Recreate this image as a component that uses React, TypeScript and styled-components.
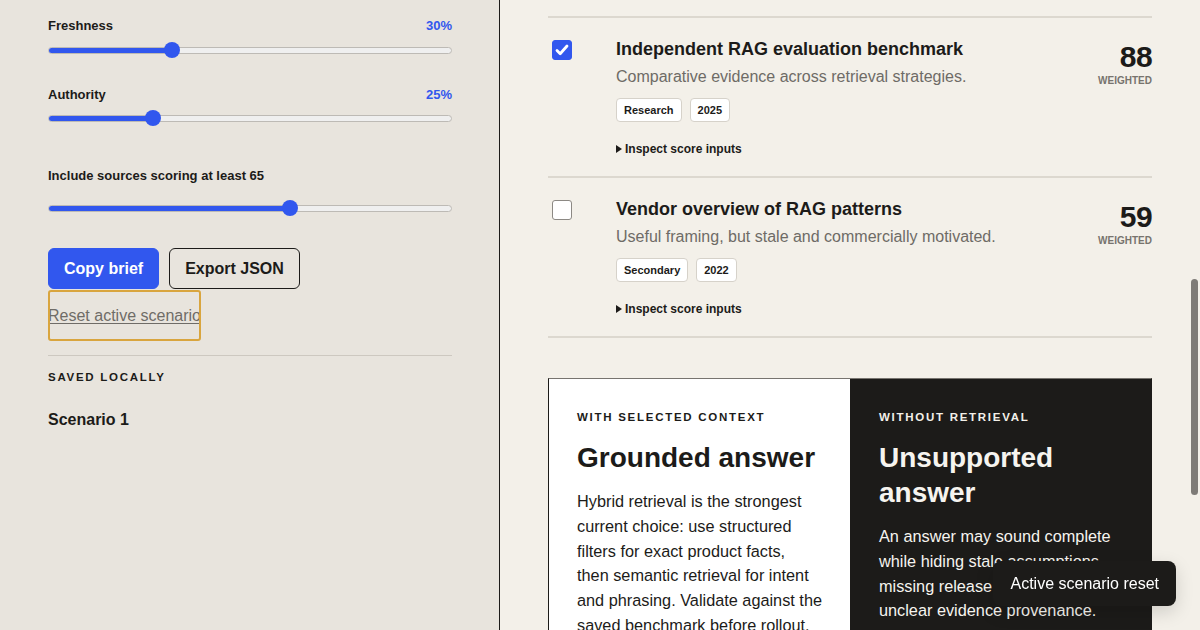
import { FC } from 'react'
import styled, { createGlobalStyle } from 'styled-components'

const GlobalStyle = createGlobalStyle`
  html, body {
    margin: 0;
    padding: 0;
    height: 100%;
    overflow: hidden;
  }
  body {
    font-family: "Liberation Sans", Arial, Helvetica, sans-serif;
    color: #1c1b19;
    -webkit-font-smoothing: antialiased;
  }
  * {
    box-sizing: border-box;
  }
`

const palette = {
  ink: '#1c1b19',
  blue: '#3157ee',
  sidebar: '#e8e4dd',
  page: '#f3f0e9',
  rule: '#dcd8cf',
  muted: '#6e6b66',
}

const Layout = styled.div`
  display: grid;
  grid-template-columns: 500px 1fr;
  height: 100vh;
`

/* ---------- sidebar ---------- */

const Sidebar = styled.aside`
  background: ${palette.sidebar};
  border-right: 1px solid ${palette.ink};
  padding: 18px 47px 0 48px;
  display: flex;
  flex-direction: column;
`

const Field = styled.div<{ $top?: number; $gap?: number }>`
  display: flex;
  flex-direction: column;
  gap: ${({ $gap }) => $gap ?? 8}px;
  margin-top: ${({ $top }) => $top ?? 0}px;
`

const FieldHead = styled.div`
  display: flex;
  justify-content: space-between;
  font-size: 13px;
  line-height: 16px;
  font-weight: 700;
`

const FieldValue = styled.span`
  color: ${palette.blue};
`

const Track = styled.div`
  position: relative;
  height: 16px;
  display: flex;
  align-items: center;
`

const Rail = styled.div`
  width: 100%;
  height: 7px;
  border-radius: 4px;
  background: #efefef;
  border: 1px solid #bdbab5;
  overflow: hidden;
`

const Fill = styled.div`
  height: 100%;
  background: ${palette.blue};
`

const Thumb = styled.div`
  position: absolute;
  top: 0;
  width: 16px;
  height: 16px;
  margin-left: -8px;
  border-radius: 50%;
  background: ${palette.blue};
`

const Slider: FC<{ value: number }> = ({ value }) => {
  // thumb travels inside the rail, 8px in from each end
  const pos = `calc(8px + (100% - 16px) * ${value / 100})`
  return (
    <Track role="slider" aria-valuenow={value}>
      <Rail>
        <Fill style={{ width: pos }} />
      </Rail>
      <Thumb style={{ left: pos }} />
    </Track>
  )
}

const Actions = styled.div`
  display: flex;
  gap: 10px;
  margin-top: 32px;
`

const Button = styled.button<{ $primary?: boolean }>`
  height: 41px;
  padding: 0 15px;
  border-radius: 6px;
  font-family: inherit;
  font-size: 16px;
  font-weight: 700;
  cursor: pointer;
  border: 1px solid ${({ $primary }) => ($primary ? palette.blue : palette.ink)};
  background: ${({ $primary }) => ($primary ? palette.blue : 'transparent')};
  color: ${({ $primary }) => ($primary ? '#fff' : palette.ink)};
`

const ResetLink = styled.button`
  align-self: flex-start;
  width: 153px;
  height: 51px;
  padding: 0;
  margin: 1px 0 0;
  border: none;
  background: transparent;
  outline: 2px solid #d9a53e;
  outline-offset: -2px;
  border-radius: 3px;
  overflow: hidden;
  white-space: nowrap;
  text-align: left;
  font-family: inherit;
  font-size: 16px;
  color: #6f6c67;
  text-decoration: underline;
  text-underline-offset: 2px;
`

const Divider = styled.hr`
  width: 100%;
  margin: 14px 0 0;
  border: none;
  border-top: 1px solid #cdc8c0;
`

const Eyebrow = styled.div<{ $light?: boolean }>`
  font-size: 11.5px;
  line-height: 14px;
  font-weight: 700;
  letter-spacing: 0.15em;
  text-transform: uppercase;
  color: ${({ $light }) => ($light ? '#f3f0e9' : palette.ink)};
`

const SavedTitle = styled(Eyebrow)`
  margin-top: 14px;
`

const SavedItem = styled.div`
  margin-top: 26px;
  font-size: 16px;
  line-height: 20px;
  font-weight: 700;
`

/* ---------- main column ---------- */

const Main = styled.main`
  background: ${palette.page};
  padding: 16px 48px 0;
  overflow: hidden;
`

const SourceList = styled.div`
  border-top: 2px solid ${palette.rule};
`

const SourceRow = styled.div`
  display: grid;
  grid-template-columns: 68px 1fr auto;
  padding: 20px 0 19px;
  border-bottom: 2px solid ${palette.rule};
`

const Check = styled.span<{ $checked?: boolean }>`
  margin: 2px 0 0 4px;
  width: 20px;
  height: 20px;
  border-radius: 3px;
  display: flex;
  align-items: center;
  justify-content: center;
  background: ${({ $checked }) => ($checked ? palette.blue : '#fff')};
  border: 1px solid ${({ $checked }) => ($checked ? palette.blue : '#8c8984')};
`

const SourceBody = styled.div`
  display: flex;
  flex-direction: column;
`

const SourceTitle = styled.h3`
  margin: 0;
  font-size: 18px;
  line-height: 22px;
  font-weight: 700;
`

const SourceDesc = styled.p`
  margin: 6px 0 0;
  font-size: 16px;
  line-height: 22px;
  color: ${palette.muted};
`

const Tags = styled.div`
  display: flex;
  gap: 8px;
  margin-top: 10px;
`

const Tag = styled.span`
  height: 24px;
  padding: 0 7px;
  display: flex;
  align-items: center;
  background: #fff;
  border: 1px solid #d6d2ca;
  border-radius: 4px;
  font-size: 11px;
  font-weight: 700;
`

const Inspect = styled.div`
  margin-top: 19px;
  font-size: 12px;
  line-height: 16px;
  font-weight: 700;
  display: flex;
  align-items: center;
  gap: 3px;

  &::before {
    content: '';
    border-left: 6px solid ${palette.ink};
    border-top: 4px solid transparent;
    border-bottom: 4px solid transparent;
  }
`

const Score = styled.div`
  display: flex;
  flex-direction: column;
  align-items: flex-end;
  padding-top: 4px;
`

const ScoreValue = styled.span`
  font-size: 30px;
  line-height: 30px;
  font-weight: 700;
  letter-spacing: -0.02em;
`

const ScoreLabel = styled.span`
  margin-top: 3px;
  font-size: 10px;
  line-height: 12px;
  font-weight: 700;
  color: #77736d;
`

const Compare = styled.section`
  margin-top: 40px;
  display: grid;
  grid-template-columns: 1fr 1fr;
  border: 1px solid ${palette.ink};
  border-top-color: #77746f;
`

const Answer = styled.div<{ $dark?: boolean }>`
  padding: 31px 20px 0 ${({ $dark }) => ($dark ? 29 : 28)}px;
  height: 280px;
  background: ${({ $dark }) => ($dark ? palette.ink : '#fff')};
  color: ${({ $dark }) => ($dark ? '#f6f4ef' : palette.ink)};
`

const AnswerTitle = styled.h2`
  margin: 16px 0 14px;
  font-size: 28px;
  line-height: 35px;
  font-weight: 700;
`

const AnswerText = styled.p`
  margin: 0;
  font-size: 16.3px;
  line-height: 24.8px;
`

const Toast = styled.div`
  position: fixed;
  right: 24px;
  bottom: 24px;
  padding: 12px 17px;
  border-radius: 8px;
  background: ${palette.ink};
  color: #fff;
  font-size: 16px;
  line-height: 21px;
  box-shadow: 0 6px 18px rgba(0, 0, 0, 0.15);
`

const ScrollThumb = styled.div`
  position: fixed;
  right: 2px;
  top: 279px;
  width: 7px;
  height: 216px;
  border-radius: 4px;
  background: #7e7b77;
`

const CheckMark = () => (
  <svg width="16" height="16" viewBox="0 0 16 16" fill="none">
    <path d="M3 8.5l3.2 3.2L13 4" stroke="#fff" strokeWidth="2.8" strokeLinecap="round" strokeLinejoin="round" />
  </svg>
)

const sources = [
  {
    title: 'Independent RAG evaluation benchmark',
    desc: 'Comparative evidence across retrieval strategies.',
    tags: ['Research', '2025'],
    score: 88,
    checked: true,
  },
  {
    title: 'Vendor overview of RAG patterns',
    desc: 'Useful framing, but stale and commercially motivated.',
    tags: ['Secondary', '2022'],
    score: 59,
    checked: false,
  },
]

const groundedLines = [
  'Hybrid retrieval is the strongest',
  'current choice: use structured',
  'filters for exact product facts,',
  'then semantic retrieval for intent',
  'and phrasing. Validate against the',
  'saved benchmark before rollout.',
]

const unsupportedLines = [
  'An answer may sound complete',
  'while hiding stale assumptions,',
  'missing release constraints, and',
  'unclear evidence provenance.',
]

const Lines: FC<{ lines: string[] }> = ({ lines }) => (
  <AnswerText>
    {lines.map((l, i) => (
      <span key={i}>
        {l}
        {i < lines.length - 1 && <br />}
      </span>
    ))}
  </AnswerText>
)

export const App = () => (
  <>
    <GlobalStyle />
    <Layout>
      <Sidebar>
        <Field>
          <FieldHead>
            <span>Freshness</span>
            <FieldValue>30%</FieldValue>
          </FieldHead>
          <Slider value={30} />
        </Field>
        <Field $top={29} $gap={7}>
          <FieldHead>
            <span>Authority</span>
            <FieldValue>25%</FieldValue>
          </FieldHead>
          <Slider value={25} />
        </Field>
        <Field $top={42} $gap={16}>
          <FieldHead>
            <span>Include sources scoring at least 65</span>
          </FieldHead>
          <Slider value={60.3} />
        </Field>
        <Actions>
          <Button $primary>Copy brief</Button>
          <Button>Export JSON</Button>
        </Actions>
        <ResetLink>Reset active scenario</ResetLink>
        <Divider />
        <SavedTitle>Saved locally</SavedTitle>
        <SavedItem>Scenario 1</SavedItem>
      </Sidebar>

      <Main>
        <SourceList>
          {sources.map((s) => (
            <SourceRow key={s.title}>
              <Check $checked={s.checked}>{s.checked && <CheckMark />}</Check>
              <SourceBody>
                <SourceTitle>{s.title}</SourceTitle>
                <SourceDesc>{s.desc}</SourceDesc>
                <Tags>
                  {s.tags.map((t) => (
                    <Tag key={t}>{t}</Tag>
                  ))}
                </Tags>
                <Inspect>Inspect score inputs</Inspect>
              </SourceBody>
              <Score>
                <ScoreValue>{s.score}</ScoreValue>
                <ScoreLabel>WEIGHTED</ScoreLabel>
              </Score>
            </SourceRow>
          ))}
        </SourceList>

        <Compare>
          <Answer>
            <Eyebrow>With selected context</Eyebrow>
            <AnswerTitle>Grounded answer</AnswerTitle>
            <Lines lines={groundedLines} />
          </Answer>
          <Answer $dark>
            <Eyebrow $light>Without retrieval</Eyebrow>
            <AnswerTitle>
              Unsupported
              <br />
              answer
            </AnswerTitle>
            <Lines lines={unsupportedLines} />
          </Answer>
        </Compare>
      </Main>
    </Layout>
    <ScrollThumb />
    <Toast>Active scenario reset</Toast>
  </>
)

export default App
